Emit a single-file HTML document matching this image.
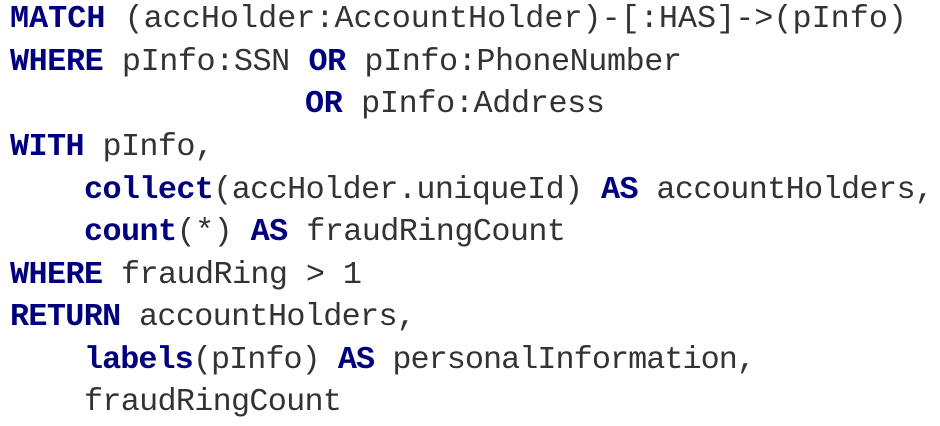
<!DOCTYPE html>
<html><head><style>
html,body{margin:0;padding:0;background:#fff;width:940px;height:426px;overflow:hidden}
svg{position:absolute;left:0;top:0}
text{font-family:"Liberation Mono",monospace;font-size:31.8px;fill:#333;white-space:pre}
tspan.k{fill:#00007f;font-weight:bold}
</style></head><body>
<svg width="940" height="426" xmlns="http://www.w3.org/2000/svg">
<text x="10" y="27" textLength="897" lengthAdjust="spacing"><tspan class="k">MATCH</tspan> (accHolder:AccountHolder)-[:HAS]-&gt;(pInfo)</text>
<text x="10" y="70" textLength="672" lengthAdjust="spacing"><tspan class="k">WHERE</tspan> pInfo:SSN <tspan class="k">OR</tspan> pInfo:PhoneNumber</text>
<text x="305" y="112" textLength="300" lengthAdjust="spacing"><tspan class="k">OR</tspan> pInfo:Address</text>
<text x="10" y="155" textLength="204" lengthAdjust="spacing"><tspan class="k">WITH</tspan> pInfo,</text>
<text x="84" y="198" textLength="850" lengthAdjust="spacing"><tspan class="k">collect</tspan>(accHolder.uniqueId) <tspan class="k">AS</tspan> accountHolders,</text>
<text x="84" y="240" textLength="482" lengthAdjust="spacing"><tspan class="k">count</tspan>(*) <tspan class="k">AS</tspan> fraudRingCount</text>
<text x="10" y="283" textLength="352" lengthAdjust="spacing"><tspan class="k">WHERE</tspan> fraudRing &gt; 1</text>
<text x="10" y="325" textLength="406" lengthAdjust="spacing"><tspan class="k">RETURN</tspan> accountHolders,</text>
<text x="84" y="368" textLength="672" lengthAdjust="spacing"><tspan class="k">labels</tspan>(pInfo) <tspan class="k">AS</tspan> personalInformation,</text>
<text x="84" y="410" textLength="258" lengthAdjust="spacing">fraudRingCount</text>
</svg>
</body></html>
